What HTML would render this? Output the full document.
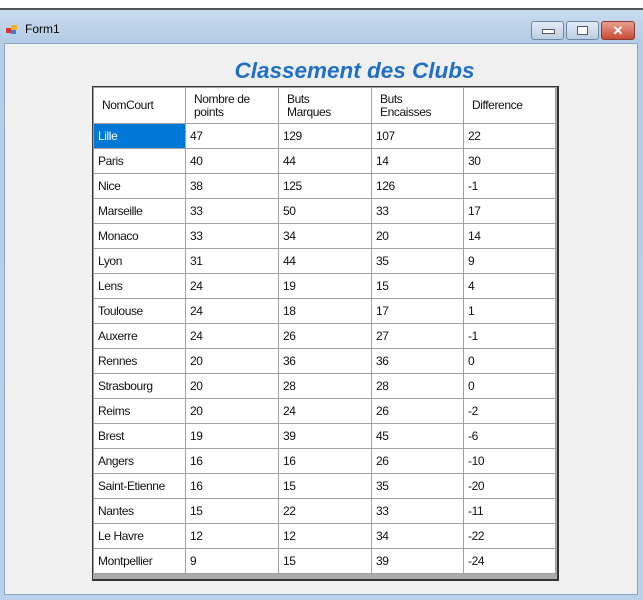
<!DOCTYPE html>
<html><head><style>
body{margin:0;width:643px;height:598px;background:#fff;position:relative;overflow:hidden;font-family:"Liberation Sans",sans-serif}
.win{position:absolute;left:0;top:8px;width:643px;height:590px;background:linear-gradient(#c9dcef,#b5cde6 30px,#b9d1ea);border-top:2px solid #555}
.client{position:absolute;left:4px;top:33px;width:632px;height:550px;background:#f0f0f0;border:1px solid #8aa6c4}
.title{position:absolute;left:25px;top:12px;font-size:12px;color:#000}
.icon{position:absolute;left:6px;top:15px;width:11px;height:9px}
.btn{position:absolute;top:11px;height:17px;border:1px solid #6f86a3;border-radius:3px;background:linear-gradient(#e3ecf6,#bccde2)}
.h1{position:absolute;left:0;width:643px;text-align:center;top:58px;padding-left:66px;box-sizing:border-box;font-size:22.5px;font-weight:bold;font-style:italic;color:#1f6fc9}
.grid{position:absolute;left:92px;top:86px;width:464px;height:492px;background:#ababab;border:1px solid #333;border-right-width:2px;border-bottom-width:2px}
table{border-collapse:collapse;position:absolute;left:0;top:0;table-layout:fixed;width:462px}
td{border:1px solid #a0a0a0;height:25px;padding:0 0 0 4px;font-size:12px;box-sizing:border-box;background:#fff;letter-spacing:-0.4px;color:#111;white-space:nowrap}
tr.h td{height:36px;line-height:13px;padding-left:8px}
td.sel{background:#0078d7;color:#fff}
</style></head><body>
<div class="win">
<svg class="icon" viewBox="0 0 11 9"><rect x="0" y="3" width="5" height="5" fill="#d33"/><rect x="5" y="0" width="6" height="5" fill="#f0b020"/><rect x="5" y="5" width="5" height="4" fill="#3a7bd5"/></svg>
<div class="title">Form1</div>
<div class="btn" style="left:531px;width:31px"><div style="position:absolute;left:10px;top:7px;width:11px;height:3px;background:#fff;border:1px solid #556"></div></div>
<div class="btn" style="left:566px;width:31px"><div style="position:absolute;left:10px;top:4px;width:9px;height:7px;border:1px solid #556;background:#fff"></div></div>
<div class="btn" style="left:601px;width:32px;background:linear-gradient(#e8a090,#c74a35);border-color:#8a3a30;color:#fff;font-weight:bold;font-size:13px;text-align:center;line-height:17px">✕</div>
<div class="client"></div>
</div>
<div class="h1">Classement des Clubs</div>
<div class="grid"><table>
<colgroup><col style="width:92px"><col style="width:93px"><col style="width:93px"><col style="width:92px"><col style="width:92px"></colgroup>
<tr class="h"><td>NomCourt</td><td>Nombre de<br>points</td><td>Buts<br>Marques</td><td>Buts<br>Encaisses</td><td>Difference</td></tr>
<tr><td class="sel">Lille</td><td>47</td><td>129</td><td>107</td><td>22</td></tr>
<tr><td>Paris</td><td>40</td><td>44</td><td>14</td><td>30</td></tr>
<tr><td>Nice</td><td>38</td><td>125</td><td>126</td><td>-1</td></tr>
<tr><td>Marseille</td><td>33</td><td>50</td><td>33</td><td>17</td></tr>
<tr><td>Monaco</td><td>33</td><td>34</td><td>20</td><td>14</td></tr>
<tr><td>Lyon</td><td>31</td><td>44</td><td>35</td><td>9</td></tr>
<tr><td>Lens</td><td>24</td><td>19</td><td>15</td><td>4</td></tr>
<tr><td>Toulouse</td><td>24</td><td>18</td><td>17</td><td>1</td></tr>
<tr><td>Auxerre</td><td>24</td><td>26</td><td>27</td><td>-1</td></tr>
<tr><td>Rennes</td><td>20</td><td>36</td><td>36</td><td>0</td></tr>
<tr><td>Strasbourg</td><td>20</td><td>28</td><td>28</td><td>0</td></tr>
<tr><td>Reims</td><td>20</td><td>24</td><td>26</td><td>-2</td></tr>
<tr><td>Brest</td><td>19</td><td>39</td><td>45</td><td>-6</td></tr>
<tr><td>Angers</td><td>16</td><td>16</td><td>26</td><td>-10</td></tr>
<tr><td>Saint-Etienne</td><td>16</td><td>15</td><td>35</td><td>-20</td></tr>
<tr><td>Nantes</td><td>15</td><td>22</td><td>33</td><td>-11</td></tr>
<tr><td>Le Havre</td><td>12</td><td>12</td><td>34</td><td>-22</td></tr>
<tr><td>Montpellier</td><td>9</td><td>15</td><td>39</td><td>-24</td></tr>
</table></div>
</body></html>
